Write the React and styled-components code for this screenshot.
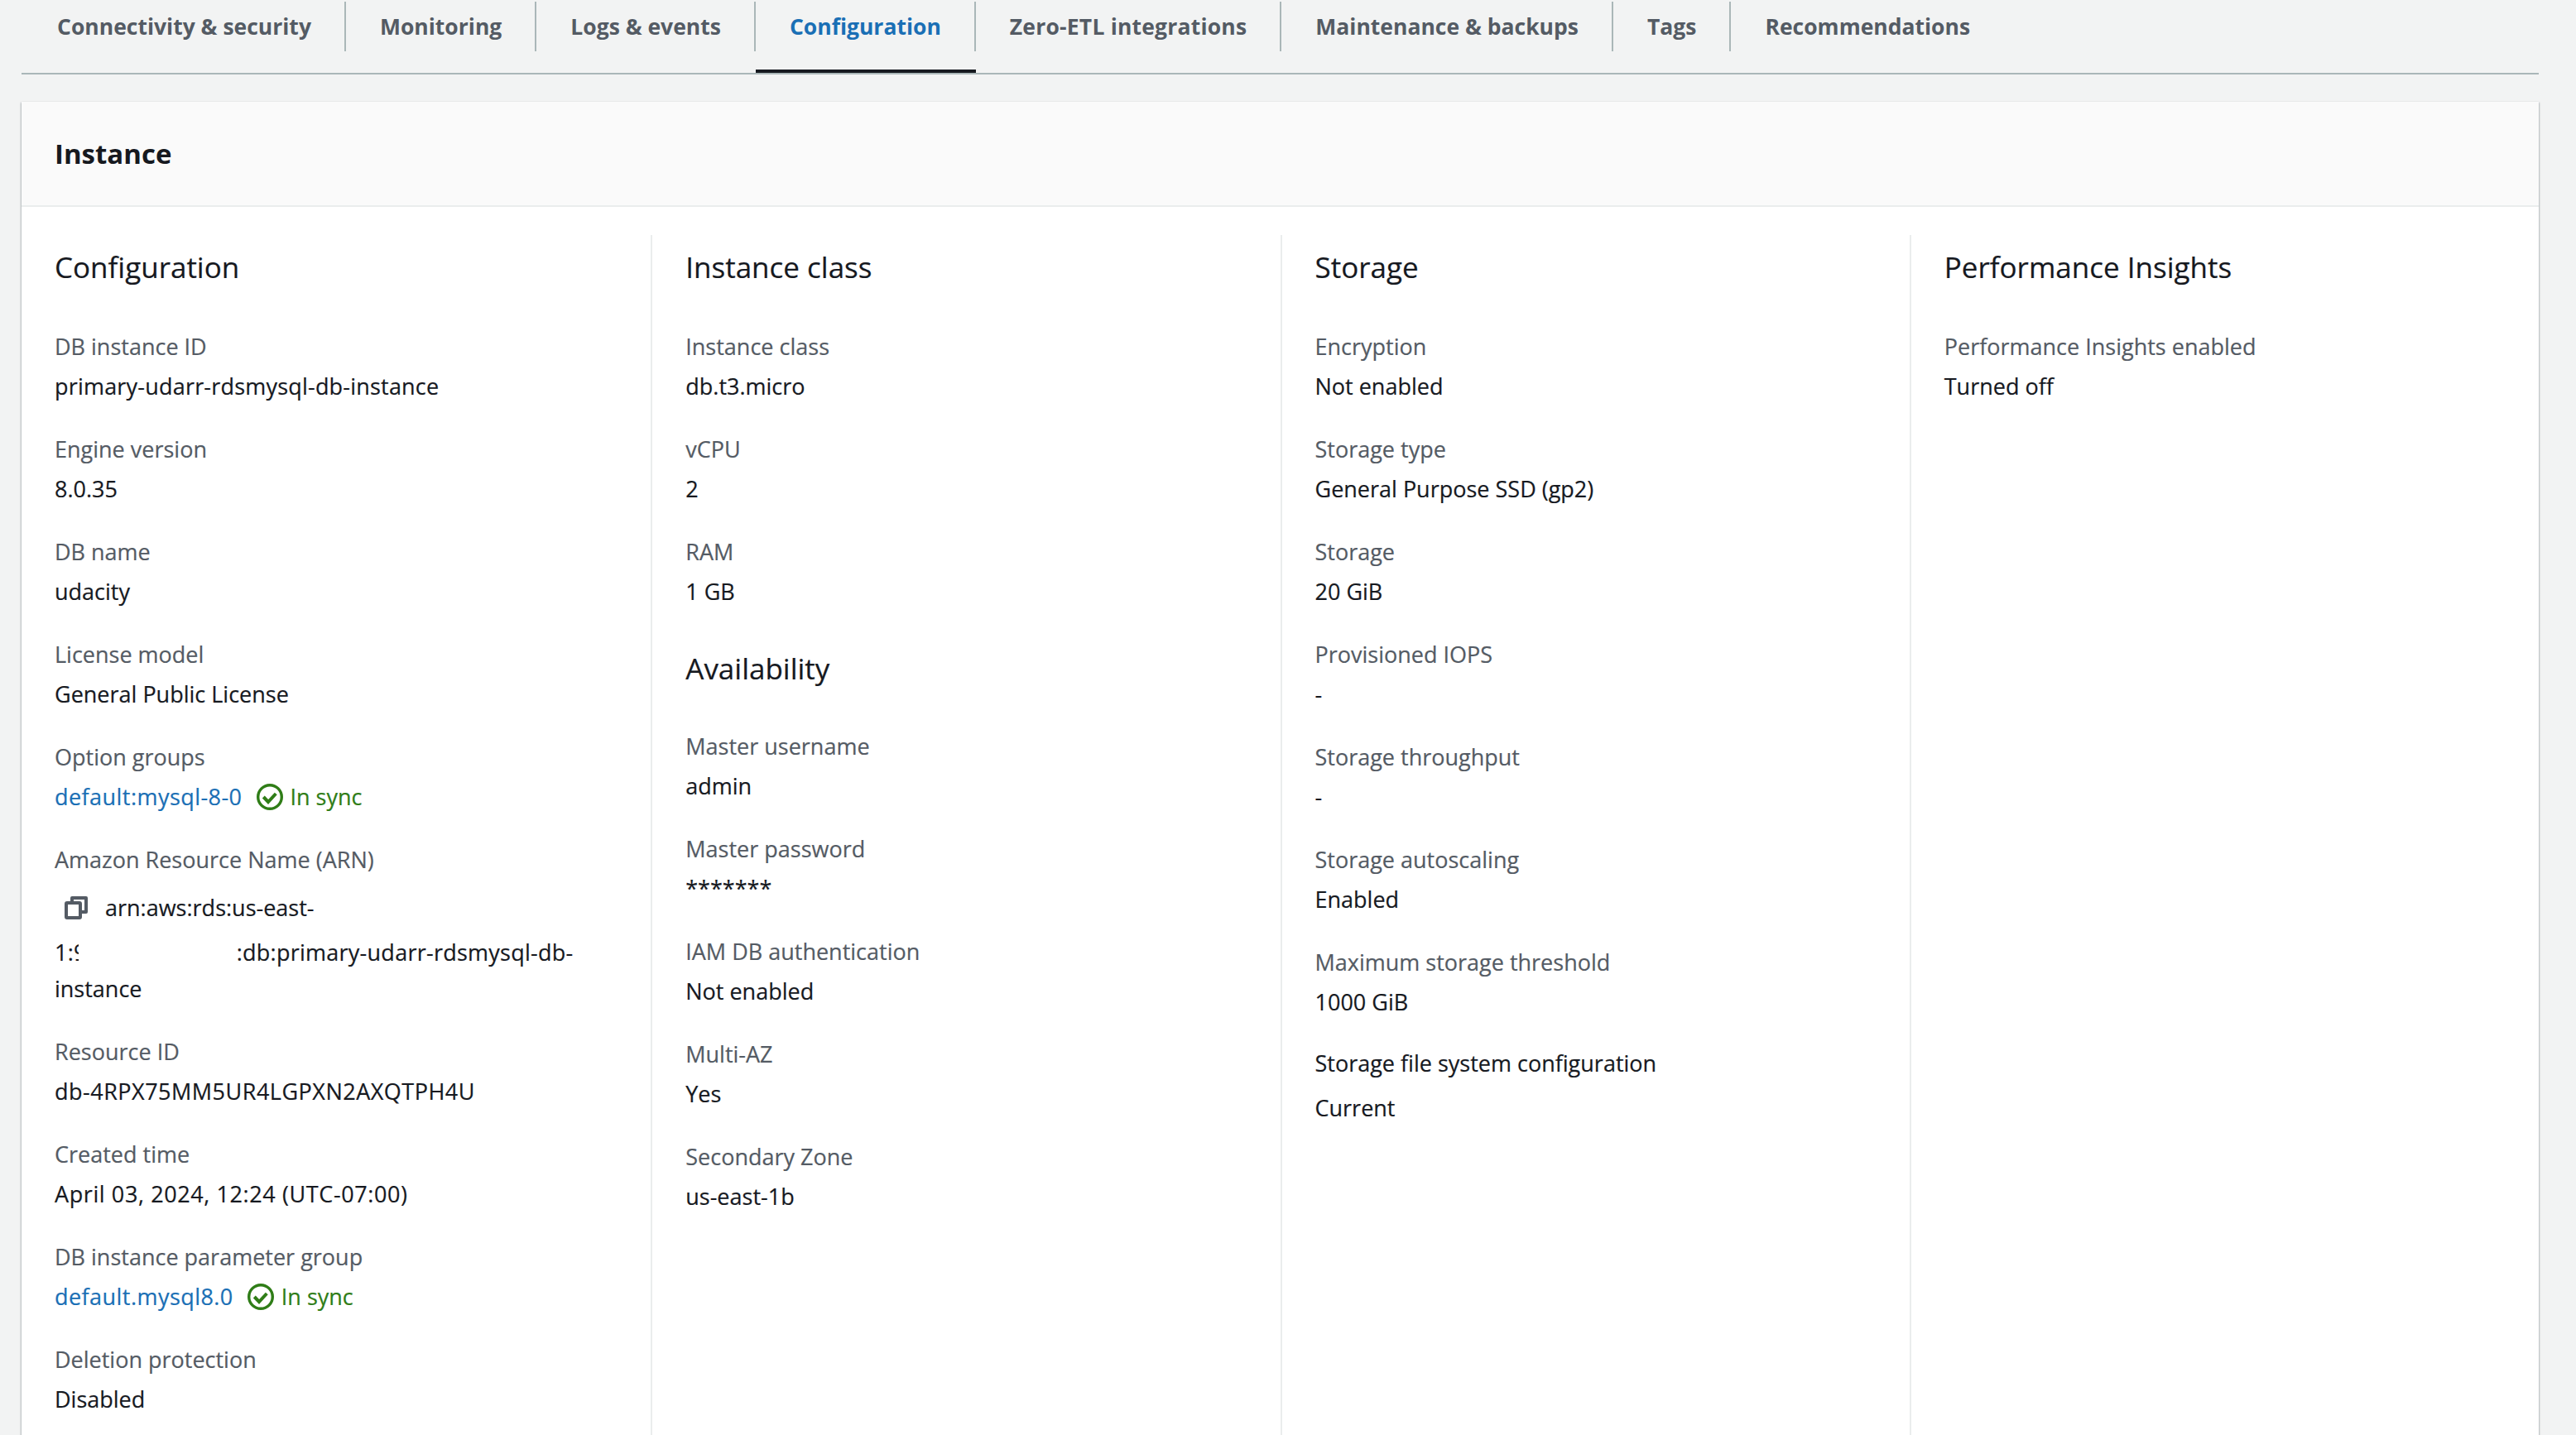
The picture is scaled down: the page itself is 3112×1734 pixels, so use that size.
import styled, { createGlobalStyle } from 'styled-components';

const GlobalStyle = createGlobalStyle`
  html, body {
    margin: 0;
    padding: 0;
    background: #f2f3f3;
  }
  body {
    font-family: "Open Sans", "Liberation Sans", sans-serif;
    font-size: 27px;
    line-height: 44px;
    color: #16191f;
    -webkit-text-stroke: 0.2px currentColor;
  }
  #root {
    height: 1734px;
    overflow: hidden;
  }
`;

const tabs = [
  { name: 'Connectivity & security' },
  { name: 'Monitoring' },
  { name: 'Logs & events' },
  { name: 'Configuration', active: true },
  { name: 'Zero-ETL integrations', spacing: '0.2px' },
  { name: 'Maintenance & backups' },
  { name: 'Tags' },
  { name: 'Recommendations' },
];

function InSyncIcon() {
  return (
    <svg width="32" height="32" viewBox="0 0 32 32" fill="none" stroke="#2f7d17">
      <circle cx="16" cy="16" r="14.3" strokeWidth="3.4" />
      <path d="M8.3 16l5.7 6 9.3-10" strokeWidth="4" />
    </svg>
  );
}

function CopyIcon() {
  return (
    <svg width="28" height="28" viewBox="0 0 28 28" fill="none" stroke="#545b64" strokeWidth="4" strokeLinejoin="round">
      <rect x="2" y="8" width="17" height="18" rx="1" />
      <path d="M9 7V2h17v17h-6" />
    </svg>
  );
}

function Status() {
  return (
    <InSync>
      <InSyncIcon />
      In sync
    </InSync>
  );
}

export default function App() {
  return (
    <Page>
      <GlobalStyle />
      <TabBar>
        {tabs.map((tab, i) => (
          <Tab key={tab.name} $active={tab.active}>
            <TabLabel $active={tab.active} $last={i === tabs.length - 1} $spacing={tab.spacing}>
              {tab.name}
            </TabLabel>
          </Tab>
        ))}
      </TabBar>

      <Card>
        <CardHeader>Instance</CardHeader>
        <Columns>
          <Column>
            <SectionTitle>Configuration</SectionTitle>
            <Field label="DB instance ID" spacing="0.2px">primary-udarr-rdsmysql-db-instance</Field>
            <Field label="Engine version">8.0.35</Field>
            <Field label="DB name">udacity</Field>
            <Field label="License model">General Public License</Field>
            <Field label="Option groups">
              <LinkRow>
                <Link>default:mysql-8-0</Link>
                <Status />
              </LinkRow>
            </Field>
            <Label>Amazon Resource Name (ARN)</Label>
            <Arn>
              <ArnFirst>
                <CopyIcon />
                arn:aws:rds:us-east-
              </ArnFirst>
              <ArnLine>
                1:9
                <Redacted />
                :db:primary-udarr-rdsmysql-db-
              </ArnLine>
              <div>instance</div>
            </Arn>
            <Field label="Resource ID" spacing="0.5px">db-4RPX75MM5UR4LGPXN2AXQTPH4U</Field>
            <Field label="Created time" spacing="0.6px">April 03, 2024, 12:24 (UTC-07:00)</Field>
            <Field label="DB instance parameter group">
              <LinkRow>
                <Link>default.mysql8.0</Link>
                <Status />
              </LinkRow>
            </Field>
            <Field label="Deletion protection">Disabled</Field>
          </Column>

          <Column>
            <SectionTitle>Instance class</SectionTitle>
            <Field label="Instance class">db.t3.micro</Field>
            <Field label="vCPU">2</Field>
            <Field label="RAM">1 GB</Field>
            <SectionTitle $sub>Availability</SectionTitle>
            <Field label="Master username">admin</Field>
            <Field label="Master password">*******</Field>
            <Field label="IAM DB authentication">Not enabled</Field>
            <Field label="Multi-AZ">Yes</Field>
            <Field label="Secondary Zone">us-east-1b</Field>
          </Column>

          <Column>
            <SectionTitle>Storage</SectionTitle>
            <Field label="Encryption">Not enabled</Field>
            <Field label="Storage type">General Purpose SSD (gp2)</Field>
            <Field label="Storage">20 GiB</Field>
            <Field label="Provisioned IOPS">-</Field>
            <Field label="Storage throughput">-</Field>
            <Field label="Storage autoscaling">Enabled</Field>
            <Field label="Maximum storage threshold">1000 GiB</Field>
            <DarkLabel>Storage file system configuration</DarkLabel>
            <Value>Current</Value>
          </Column>

          <Column>
            <SectionTitle>Performance Insights</SectionTitle>
            <Field label="Performance Insights enabled">Turned off</Field>
          </Column>
        </Columns>
      </Card>
    </Page>
  );
}

function Field({ label, spacing, children }) {
  return (
    <FieldWrap>
      <Label>{label}</Label>
      <Value $spacing={spacing}>{children}</Value>
    </FieldWrap>
  );
}

const Page = styled.div`
  padding: 0 45px 0 26px;
`;

const TabBar = styled.div`
  display: flex;
  height: 88px;
  border-bottom: 2px solid #aab7b8;
  margin-bottom: 33px;
`;

const Tab = styled.div`
  height: 82px;
  padding-top: 2px;
  border-bottom: 4px solid ${(p) => (p.$active ? '#16191f' : 'transparent')};
  &:first-child > div {
    padding-left: 43px;
  }
`;

const TabLabel = styled.div`
  height: 60px;
  line-height: 60px;
  padding: 0 40px 0 41px;
  font-size: 26.5px;
  font-weight: 700;
  letter-spacing: ${(p) => p.$spacing || 'normal'};
  -webkit-text-stroke: 0;
  color: ${(p) => (p.$active ? '#1a6fb5' : '#545b64')};
  border-right: ${(p) => (p.$last ? 'none' : '2px solid #aab7b8')};
  white-space: nowrap;
`;

const Card = styled.div`
  background: #fff;
  box-shadow: 0 1px 2px rgba(0, 28, 36, 0.3), 1px 1px 2px rgba(0, 28, 36, 0.15),
    -1px 1px 2px rgba(0, 28, 36, 0.15);
`;

const CardHeader = styled.div`
  height: 125px;
  line-height: 125px;
  padding-left: 40px;
  font-size: 33px;
  font-weight: 700;
  -webkit-text-stroke: 0;
  background: #fafafa;
  border-bottom: 2px solid #eaeded;
`;

const Columns = styled.div`
  display: grid;
  grid-template-columns: repeat(4, 1fr);
  margin-top: 34px;
`;

const Column = styled.div`
  padding: 0 40px;
  min-height: 1500px;
  border-left: 2px solid #eaeded;
  &:first-child {
    border-left: none;
  }
`;

const SectionTitle = styled.h3`
  margin: 0;
  padding-bottom: ${(p) => (p.$sub ? '33px' : '35px')};
  font-size: 35px;
  line-height: 78px;
  font-weight: 400;
`;

const FieldWrap = styled.div`
  margin-bottom: 32px;
`;

const Label = styled.div`
  color: #545b64;
  line-height: 44px;
  margin-bottom: 4px;
`;

const DarkLabel = styled.div`
  line-height: 44px;
  margin: -2px 0 10px;
`;

const Value = styled.div`
  line-height: 44px;
  letter-spacing: ${(p) => p.$spacing || 'normal'};
`;

const LinkRow = styled.div`
  display: flex;
  align-items: center;
  gap: 17px;
`;

const Link = styled.span`
  color: #1a6fb5;
  letter-spacing: 0.45px;
`;

const InSync = styled.span`
  display: inline-flex;
  align-items: center;
  gap: 9px;
  letter-spacing: normal;
  color: #2f7d17;
`;

const Arn = styled.div`
  margin-bottom: 32px;
`;

const ArnFirst = styled.div`
  display: flex;
  align-items: center;
  gap: 21px;
  height: 54px;
  padding-left: 12px;
  margin: 9px 0 5px;
`;

const ArnLine = styled.div`
  letter-spacing: 0.25px;
`;

const Redacted = styled.span`
  display: inline-block;
  position: relative;
  width: 191px;
  height: 44px;
  margin-left: -10px;
  background: #fff;
  vertical-align: top;
`;
